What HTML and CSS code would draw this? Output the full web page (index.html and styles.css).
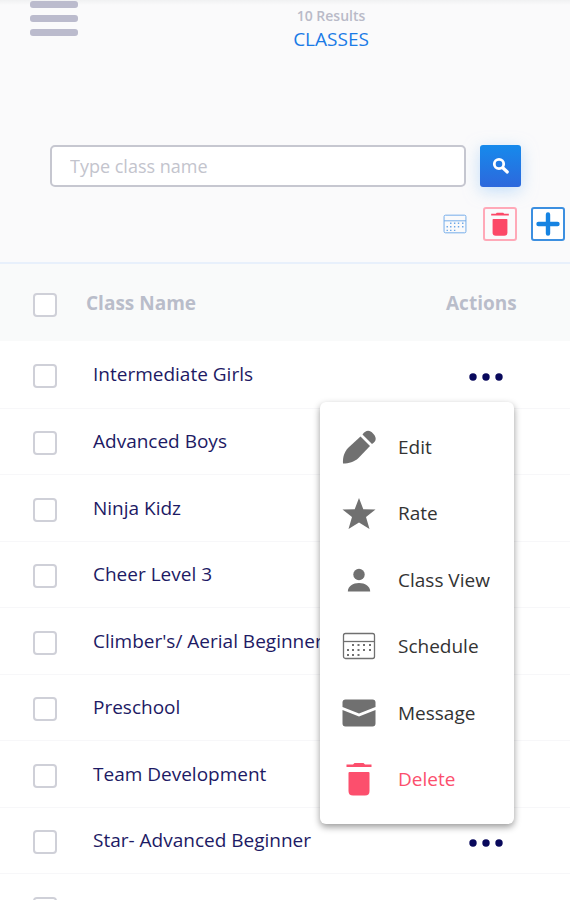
FILE: index.html
```html
<!DOCTYPE html>
<html lang="en">
<head>
<meta charset="utf-8">
<meta name="viewport" content="width=device-width, initial-scale=1">
<title>Classes</title>
<link rel="stylesheet" href="styles.css">
</head>
<body>
<svg class="sprite" aria-hidden="true">
  <symbol id="trash" viewBox="0 0 34 34">
    <path d="M4.500 2.500H11L12.500 1H21.500L23 2.500H29.500V5H4.500Z"/>
    <path d="M6.500 11Q6.500 10 7.500 10H26.500Q27.500 10 27.500 11V29Q27.500 33.500 23 33.500H11Q6.500 33.500 6.500 29Z"/>
  </symbol>
  <symbol id="calendar" viewBox="0 0 34 34">
    <rect x="1.500" y="4.500" width="31" height="25" rx="2" fill="none" stroke="currentColor" stroke-width="1.300"/>
    <path d="M1.500 12.500H32.500" stroke="currentColor" stroke-width="1.300"/>
    <path d="M10 16H12M15.500 16H17.500M21 16H23M27 16H29M5 21H7M10 21H12M15.500 21H17.500M21 21H23M27 21H29M5 26H7M10 26H12M15.500 26H17.500" stroke="currentColor" stroke-width="2"/>
  </symbol>
  <symbol id="dots" viewBox="0 0 34 8">
    <circle cx="4" cy="4" r="3.700"/><circle cx="17" cy="4" r="3.700"/><circle cx="30" cy="4" r="3.700"/>
  </symbol>
</svg>

<header class="header">
  <button class="burger" aria-label="Open navigation"><span></span><span></span><span></span></button>
  <div class="heading">
    <p class="count">10 Results</p>
    <h1 class="title">CLASSES</h1>
  </div>
</header>

<main>
  <form class="search">
    <input class="search-field" type="text" placeholder="Type class name" aria-label="Class name">
    <button class="search-button" type="button" aria-label="Search">
      <svg viewBox="0 0 18 18" width="18" height="18" stroke="#fff" stroke-linecap="round"><circle cx="7" cy="7" r="4.700" fill="none" stroke-width="2.800"/><path d="M11 11L15.300 15" stroke-width="3.200"/></svg>
    </button>
  </form>
  <div class="tools">
    <button class="tool tool-plain" aria-label="Schedule"><svg width="24" height="24"><use href="#calendar"/></svg></button>
    <button class="tool tool-delete" aria-label="Delete"><svg width="24" height="24"><use href="#trash"/></svg></button>
    <button class="tool tool-add" aria-label="Add class"><svg viewBox="0 0 24 24" width="24" height="24"><path d="M12 2.500V21.500M2.500 12H21.500" stroke="currentColor" stroke-width="4.400" stroke-linecap="round"/></svg></button>
  </div>

  <table class="classes">
    <thead>
      <tr><th class="check"><input type="checkbox" aria-label="Select all classes"></th><th class="name">Class Name</th><th class="actions">Actions</th></tr>
    </thead>
    <tbody>
      <tr>
        <td class="check"><input type="checkbox" aria-label="Select Intermediate Girls"></td>
        <td class="name">Intermediate Girls</td>
        <td class="actions">
          <button class="more" aria-label="Actions for Intermediate Girls"><svg width="34" height="8"><use href="#dots"/></svg></button>
          <div class="menu">
            <button class="item"><svg viewBox="0 0 34 34" width="34" height="34"><path d="M1 33.500C.500 27 2.500 22 6 18L18.500 6.500L28 16L16.500 28C12 32 7 33.500 1 33.500Z"/><path d="M20.500 4.500C24-.500 28 0 31 3.500C34.500 7 35 11 30 14Z"/></svg>Edit</button>
            <button class="item"><svg viewBox="0 0 34 34" width="34" height="34"><path d="M17 2L21.300 13.200L33.500 13.500L24 21L27.500 33L17 26.400L6.500 33L10 21L.500 13.500L12.700 13.200Z"/></svg>Rate</button>
            <button class="item"><svg viewBox="0 0 34 34" width="34" height="34"><circle cx="17" cy="11.500" r="5.700"/><path d="M5.800 28.500C6 23 11 20 17 20C23 20 28 23 28.200 28.500Z"/></svg>Class View</button>
            <button class="item"><svg width="34" height="34"><use href="#calendar"/></svg>Schedule</button>
            <button class="item"><svg viewBox="0 0 34 34" width="34" height="34"><path d="M.500 11V6.500Q.500 3.500 3.500 3.500H30.500Q33.500 3.500 33.500 6.500V11L17 17.500Z"/><path d="M.500 14L17 20.500L33.500 14V27.500Q33.500 30.500 30.500 30.500H3.500Q.500 30.500 .500 27.500Z"/></svg>Message</button>
            <button class="item item-delete"><svg width="34" height="34"><use href="#trash"/></svg>Delete</button>
          </div>
        </td>
      </tr>
      <tr><td class="check"><input type="checkbox" aria-label="Select Advanced Boys"></td><td class="name">Advanced Boys</td><td class="actions"><button class="more" aria-label="Actions"><svg width="34" height="8"><use href="#dots"/></svg></button></td></tr>
      <tr><td class="check"><input type="checkbox" aria-label="Select Ninja Kidz"></td><td class="name">Ninja Kidz</td><td class="actions"><button class="more" aria-label="Actions"><svg width="34" height="8"><use href="#dots"/></svg></button></td></tr>
      <tr><td class="check"><input type="checkbox" aria-label="Select Cheer Level 3"></td><td class="name">Cheer Level 3</td><td class="actions"><button class="more" aria-label="Actions"><svg width="34" height="8"><use href="#dots"/></svg></button></td></tr>
      <tr><td class="check"><input type="checkbox" aria-label="Select Climber's/ Aerial Beginner"></td><td class="name">Climber's/ Aerial Beginner</td><td class="actions"><button class="more" aria-label="Actions"><svg width="34" height="8"><use href="#dots"/></svg></button></td></tr>
      <tr><td class="check"><input type="checkbox" aria-label="Select Preschool"></td><td class="name">Preschool</td><td class="actions"><button class="more" aria-label="Actions"><svg width="34" height="8"><use href="#dots"/></svg></button></td></tr>
      <tr><td class="check"><input type="checkbox" aria-label="Select Team Development"></td><td class="name">Team Development</td><td class="actions"><button class="more" aria-label="Actions"><svg width="34" height="8"><use href="#dots"/></svg></button></td></tr>
      <tr><td class="check"><input type="checkbox" aria-label="Select Star- Advanced Beginner"></td><td class="name">Star- Advanced Beginner</td><td class="actions"><button class="more" aria-label="Actions"><svg width="34" height="8"><use href="#dots"/></svg></button></td></tr>
      <tr><td class="check"><input type="checkbox" aria-label="Select Fun School"></td><td class="name">Fun School</td><td class="actions"><button class="more" aria-label="Actions"><svg width="34" height="8"><use href="#dots"/></svg></button></td></tr>
    </tbody>
  </table>
</main>
</body>
</html>
```
FILE: styles.css
```css
* { box-sizing: border-box; }

body {
  margin: 0;
  height: 100vh;
  overflow: hidden;
  background: #fafafb;
  color: #1d1a64;
  font-family: "Open Sans", "Noto Sans", sans-serif;
  font-size: 19px;
}

button {
  padding: 0;
  border: 0;
  background: none;
  color: inherit;
  font: inherit;
  cursor: pointer;
}

svg { display: block; fill: currentColor; flex: none; }
.sprite { position: absolute; width: 0; height: 0; }

.header {
  display: grid;
  grid-template-columns: 1fr auto 1fr;
  align-items: start;
  height: 145px;
  padding: 0 30px;
  background: linear-gradient(#f0f1f2, #fafafb 5px);
}

.burger { display: grid; gap: 7px; width: 48px; padding-top: 1px; }
.burger span { height: 7px; border-radius: 3px; background: #bbbbcd; }

.heading { padding: 6px 0 0 92px; text-align: center; }
.count { margin: 0; color: #b9bac8; font-size: 14px; font-weight: 600; line-height: 20px; }
.title { margin: 0; color: #1a7be6; font-size: 19px; font-weight: 400; line-height: 26px; }

.search { display: flex; gap: 14px; padding: 0 49px 0 50px; }
.search-field {
  flex: 1;
  min-width: 0;
  height: 42px;
  padding: 0 18px;
  border: 2px solid #c6c7d0;
  border-radius: 5px;
  background: #fff;
  color: #17145f;
  font: inherit;
  font-size: 18px;
}
.search-field::placeholder { color: #c3c4cd; opacity: 1; }
.search-button {
  display: grid;
  place-items: center;
  width: 41px;
  height: 42px;
  border-radius: 3px;
  background: linear-gradient(#168aec, #2d68dc);
  box-shadow: 0 4px 16px #9ecbf899;
}

.tools { display: flex; justify-content: flex-end; gap: 14px; padding: 20px 5px 21px 0; }
.tool { display: grid; place-items: center; width: 34px; height: 34px; border: 2px solid; border-radius: 3px; }
.tool-plain { width: 24px; border: 0; margin-right: 2px; color: #6aa6e8; }
.tool-delete { border-color: #ffa9b8; color: #fc4867; }
.tool-add { border-color: #3c8fe0; color: #1583e2; background: #fff; }

.classes { width: 100%; border-collapse: collapse; table-layout: fixed; text-align: left; }
.classes thead tr { height: 78px; border-top: 2px solid #e8f0fb; background: #f9fafa; }
.classes th { padding: 0; color: #b9bdca; font-weight: 700; }
.classes tbody tr { height: 67px; background: #fff; border-bottom: 1px solid #f7f7f9; }
.classes tbody tr:nth-child(even) { height: 66px; }
.classes td { padding: 0; }
.check { width: 86px; }
.check input {
  display: block;
  appearance: none;
  width: 24px;
  height: 24px;
  margin: 4px 0 0 33px;
  border: 2px solid #cfd0d8;
  border-radius: 4px;
  background: #fff;
}
.classes td.name { padding-left: 7px; white-space: nowrap; }
.actions { position: relative; width: 124px; }
.more { display: block; margin: 6px 0 0 23px; color: #09095c; }

.menu {
  position: absolute;
  z-index: 1;
  top: 61px;
  right: 56px;
  width: 194px;
  padding: 11px 0 12px;
  border-radius: 6px;
  background: #fff;
  box-shadow: 0 3px 7px #00000066;
}
.item {
  display: flex;
  align-items: center;
  gap: 22px;
  width: 100%;
  height: 67px;
  padding-left: 22px;
  color: #333;
  text-align: left;
}
.item:nth-child(even) { height: 66px; }
.item svg { color: #707070; }
.item-delete, .item-delete svg { color: #fc4f6d; }
```
